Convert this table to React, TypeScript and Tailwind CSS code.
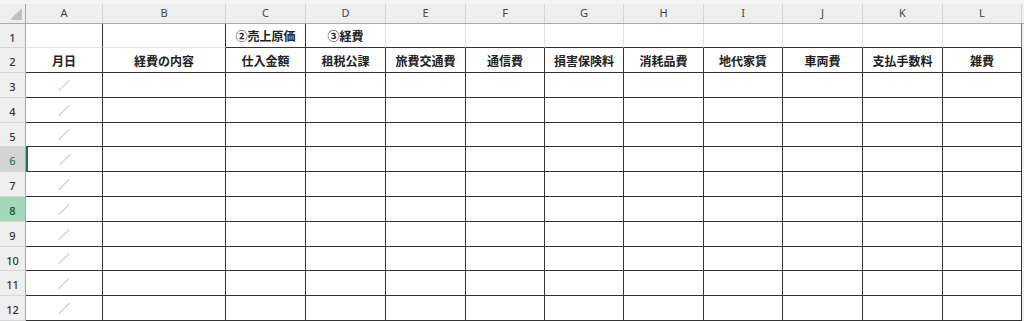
const cols = ['A', 'B', 'C', 'D', 'E', 'F', 'G', 'H', 'I', 'J', 'K', 'L']
const heads = ['月日', '経費の内容', '仕入金額', '租税公課', '旅費交通費', '通信費', '損害保険料', '消耗品費', '地代家賃', '車両費', '支払手数料', '雑費']
const rowHeights = [25, 25, 25, 24, 25, 25, 25, 25, 24, 25, 25]

const grid = 'grid grid-cols-[26px_77px_123px_80px_80px_80px_79px_79px_80px_79px_80px_80px_79px_2px]'
const jp = { fontFamily: '"Noto Sans CJK JP", sans-serif' }
const ui = { fontFamily: '"Noto Sans", "Liberation Sans", sans-serif' }

function RowHead({ n, h }: { n: number; h: number }) {
  let cls = 'bg-[#efefef] text-[#333]'
  if (n === 6) cls = 'bg-[#d3d3d3] text-[#3f7a55]'
  if (n === 8) cls = 'bg-[#a3d8b9] text-[#174f30]'
  return (
    <div
      className={`${cls} flex items-center justify-center pt-[5px] text-[11px] font-medium border-r border-r-[#a8a8a8] border-b border-b-[#d6d6d6]`}
      style={{ ...ui, height: h }}
    >
      {n}
    </div>
  )
}

export default function App() {
  return (
    <div className="w-[1024px] h-[321px] overflow-hidden bg-white">
      {/* column letters */}
      <div className="h-[4px] bg-[#f4f4f4]" />
      <div className={`${grid} h-[20px] bg-[#eeeeee] border-b border-b-[#ababab]`}>
        <div className="relative border-r border-r-[#a8a8a8]">
          <div className="absolute right-[3px] bottom-[3px] w-0 h-0 border-l-[12px] border-l-transparent border-b-[12px] border-b-[#c0c0c0]" />
        </div>
        {cols.map(c => (
          <div key={c} className="flex items-center justify-center text-[11px] text-[#444] border-r border-r-[#d4d4d4]" style={ui}>
            {c}
          </div>
        ))}
        <div />
      </div>

      {/* row 1 */}
      <div className={`${grid} h-[24px]`}>
        <RowHead n={1} h={24} />
        <div className="border-r border-r-[#333] border-b border-b-[#e2e2e2]" />
        <div className="border-r border-r-[#333] border-b border-b-[#e2e2e2]" />
        <div className="flex items-center justify-center pt-[1px] text-[12px] font-bold text-[#222] border-r border-r-[#333] border-b border-b-[#333]" style={jp}>
          ②売上原価
        </div>
        <div className="flex items-center justify-center pt-[1px] text-[12px] font-bold text-[#222] border-r border-r-[#e2e2e2] border-b border-b-[#333]" style={jp}>
          ③経費
        </div>
        {cols.slice(4).map((c, i) => (
          <div key={c} className={`border-b border-b-[#333] border-r ${i === 7 ? 'border-r-[#777]' : 'border-r-[#e2e2e2]'}`} />
        ))}
        <div className="bg-[#f2f2f2]" />
      </div>

      {/* row 2 */}
      <div className={`${grid} h-[25px]`}>
        <RowHead n={2} h={25} />
        {heads.map(t => (
          <div key={t} className="flex items-center justify-center pt-[1px] text-[12px] font-bold text-[#222] border-r border-r-[#333] border-b border-b-[#333]" style={jp}>
            {t}
          </div>
        ))}
        <div className="bg-[#f2f2f2]" />
      </div>

      {/* rows 3-12 */}
      {rowHeights.slice(1).map((h, i) => (
        <div key={i} className={grid} style={{ height: h }}>
          <RowHead n={i + 3} h={h} />
          <div
            className={`flex items-center justify-center pt-[1px] text-[12px] font-light text-[#6e6e6e] border-r border-r-[#333] border-b border-b-[#333] ${i + 3 === 6 ? 'border-l-2 border-l-[#217346]' : ''}`}
            style={jp}
          >
            ／
          </div>
          {cols.slice(1).map(c => (
            <div key={c} className="border-r border-r-[#333] border-b border-b-[#333]" />
          ))}
          <div className="bg-[#f2f2f2]" />
        </div>
      ))}
    </div>
  )
}
